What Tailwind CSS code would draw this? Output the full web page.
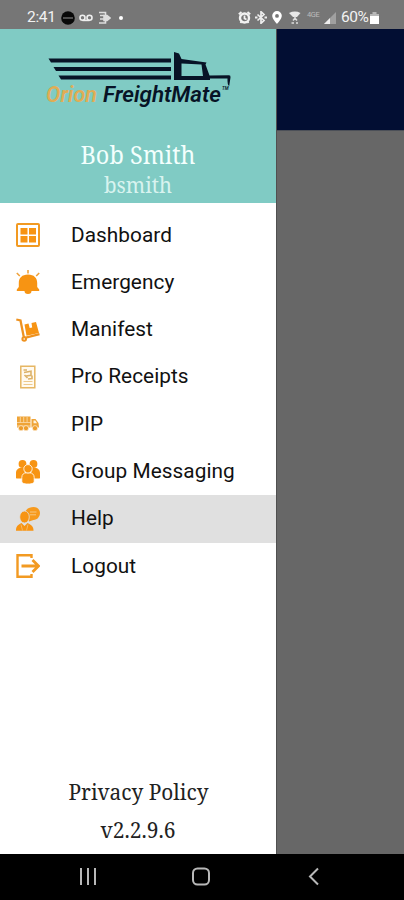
<!DOCTYPE html>
<html lang="en">
<head>
    <meta charset="UTF-8">
    <meta name="viewport" content="width=device-width, initial-scale=1.0">
    <title>Orion FreightMate</title>
    <script src="https://cdn.jsdelivr.net/npm/@tailwindcss/browser@4"></script>
</head>
<body class="bg-black">
    <div class="w-[404px] h-[900px] flex flex-col overflow-hidden font-[Roboto,sans-serif]">

        <!-- Status bar -->
        <header class="h-[29px] shrink-0 bg-[#767676] text-[#f2f2f2] flex items-center justify-between pt-[6px] pl-[27px] pr-[25px]">
            <div class="flex items-center">
                <span class="text-[15.5px] leading-none w-[28px] tracking-[-0.3px] pt-[1px]">2:41</span>
                <svg class="ml-[6px]" width="14" height="14" viewBox="0 0 14 14">
                    <circle cx="7" cy="7" r="6.8" fill="#080808"/>
                    <path d="M2 7h10" stroke="#666" stroke-width="1.5"/>
                </svg>
                <svg class="ml-[4px]" width="14" height="8" viewBox="0 0 14 8" fill="none" stroke="#eee" stroke-width="1.6">
                    <circle cx="3.5" cy="3.8" r="2.5"/>
                    <circle cx="10.5" cy="3.8" r="2.5"/>
                    <path d="M3.5 6.4h7"/>
                </svg>
                <svg class="ml-[6px]" width="12" height="14" viewBox="0 0 12 14" fill="none" stroke="#ddd" stroke-width="1.6">
                    <path d="M0 1.500h6.500V4M1 4.500h4M0 12h6.500v-2M1 8h4"/>
                    <path d="M5 4.500h3l3 2.500-3 2.500H5z" fill="#ddd"/>
                </svg>
                <span class="ml-[8px] w-[4px] h-[4px] rounded-full bg-white"></span>
            </div>
            <div class="flex items-center">
                <svg width="13" height="13" viewBox="0 0 13 13">
                    <circle cx="6.5" cy="7" r="4.5" fill="none" stroke="#f2f2f2" stroke-width="2.4"/>
                    <path d="M.8 3.200L3.500 1M12.200 3.200L9.500 1M2.500 12l1-1.500M10.500 12l-1-1.500M6.500 4.500v3l2 1" fill="none" stroke="#f2f2f2" stroke-width="1.8"/>
                </svg>
                <svg class="ml-[4px]" width="12" height="13" viewBox="0 0 12 13" fill="none" stroke="#eee" stroke-width="1.7">
                    <path d="M2.500 3.500l6.500 6L6 12.300V.7l3 2.800-6.500 6"/>
                    <path d="M0 6.500h2.500M9.500 6.500H12" stroke-width="2.2"/>
                </svg>
                <svg class="ml-[5px]" width="10" height="13" viewBox="0 0 10 13">
                    <path fill="#fff" fill-rule="evenodd" d="M5 0a4.800 4.800 0 0 0-4.800 4.800C.2 8 5 13 5 13s4.800-5 4.800-8.200A4.800 4.800 0 0 0 5 0zm0 3a1.900 1.900 0 1 1 0 3.800A1.900 1.900 0 0 1 5 3z"/>
                </svg>
                <svg class="ml-[7px]" width="12" height="13" viewBox="0 0 12 13">
                    <path d="M0 2Q6-.8 11.500 2L8 6H4z" fill="#e8e8e8"/>
                    <path d="M4 9.500l2-2.300 2 2.300M6 5v3M2.500 12h2.500M7 12h2" fill="none" stroke="#ddd" stroke-width="1.6"/>
                </svg>
                <span class="ml-[6px] mb-[5px] text-[7.5px] leading-none w-[15px] tracking-[-0.4px] text-[#bcbcbc]">4GE</span>
                <svg class="ml-[2px]" width="12" height="12" viewBox="0 0 12 12">
                    <path d="M12 0v12H0z" fill="#a0a0a0"/>
                    <path d="M6 6v6H0z" fill="#eee"/>
                </svg>
                <span class="ml-[5px] text-[15.5px] leading-none w-[28px] tracking-[-0.4px] pt-[1px]">60%</span>
                <svg class="ml-[1px]" width="9" height="13" viewBox="0 0 9 13">
                    <path d="M2.500 1h4v2H9v3H0V3h2.500z" fill="#b8b8b8"/>
                    <path d="M0 5h9v8H0z" fill="#fff"/>
                </svg>
            </div>
        </header>

        <main class="h-[825px] shrink-0 flex">
            <!-- Drawer -->
            <aside class="w-[276px] bg-white flex flex-col">
                <div class="h-[174px] shrink-0 bg-[#80cbc4] flex flex-col items-center">
                    <svg class="shrink-0" width="276" height="84" viewBox="0 0 276 84">
                        <g fill="#071326">
                            <path d="M48.500 29.500H171v4H51zM53.500 38H171v4H56zM58.500 46.500H171v4H61z"/>
                            <path fill-rule="evenodd" d="M174 23l5 1.500 2.500 5.500 25 3.500-1 2 4 11 19.500-.3q1.800 0 1.500 2.300l-1.300 8.500q-2-1-1.700-7.500H210v1.500h-36zM181.500 34.500V47H203l-1.500-11.500z"/>
                        </g>
                        <g font-family="Roboto, sans-serif" font-style="italic" font-size="22" font-weight="600">
                            <text x="46" y="72.500" textLength="51" lengthAdjust="spacingAndGlyphs" fill="#e0ad55">Orion</text>
                            <text x="103" y="72.500" textLength="118" lengthAdjust="spacingAndGlyphs" fill="#071326">FreightMate</text>
                            <text x="222" y="61" font-size="4.500" fill="#071326">TM</text>
                        </g>
                    </svg>
                    <svg class="shrink-0" width="276" height="90" viewBox="0 0 276 90" font-family="'Noto Serif', 'DejaVu Serif', serif">
                        <text x="80.500" y="50.500" font-size="24.500" textLength="115" lengthAdjust="spacingAndGlyphs" fill="#f3fffd">Bob Smith</text>
                        <text x="104" y="79.500" font-size="21.500" textLength="68" lengthAdjust="spacingAndGlyphs" fill="#d8f3ef">bsmith</text>
                    </svg>
                </div>

                <nav class="pt-[8.5px] flex flex-col text-[20.8px] text-[#111] tracking-[0.05px]">
                    <a class="h-[47.3px] flex items-center pl-[16px] gap-[31px]">
                        <svg width="24" height="24" viewBox="0 0 24 24">
                            <rect x="1" y="1" width="22" height="22" rx="1" fill="none" stroke="#f29a22" stroke-width="2"/>
                            <path d="M4.500 5h7v6.500h-7zM13 5h7v6.500h-7zM4.500 13h7v6.500h-7zM13 13h7v6.500h-7z" fill="#f79413"/>
                        </svg>
                        <span>Dashboard</span>
                    </a>
                    <a class="h-[47.3px] flex items-center pl-[16px] gap-[31px]">
                        <svg width="24" height="24" viewBox="0 0 24 24">
                            <path d="M12 4.500c-6 0-9.200 3.500-9.200 8.500v4L.8 19.500V21h22.400v-1.500l-2-2.500v-4c0-5-3.200-8.500-9.200-8.500zM8.500 21a3.500 3 0 0 0 7 0z" fill="#f79413"/>
                            <path d="M12 0v3.500M.8 3l3 3M23.200 3l-3 3" stroke="#efa23c" stroke-width="1.6"/>
                        </svg>
                        <span>Emergency</span>
                    </a>
                    <a class="h-[47.3px] flex items-center pl-[16px] gap-[31px]">
                        <svg width="24" height="24" viewBox="0 0 24 24">
                            <path d="M.3 1.500l4.200 1L8 20l15.500-3.800" fill="none" stroke="#ee9220" stroke-width="2.3"/>
                            <circle cx="8.200" cy="21" r="2.800" fill="#ee9220"/>
                            <circle cx="8.200" cy="21" r=".8" fill="#fff"/>
                            <path d="M8.500 6.500l4-1 1.200 4.500 2.500-.5-.7-4.500L20 4l3 11-12.500 2.800z" fill="#f79413"/>
                        </svg>
                        <span>Manifest</span>
                    </a>
                    <a class="h-[47.3px] flex items-center pl-[16px] gap-[31px]">
                        <svg width="24" height="24" viewBox="0 0 24 24">
                            <path d="M4.800 1.200h14v21.500h-14z" fill="#fffaf0" stroke="#e6b663" stroke-width="1.5"/>
                            <path d="M7.500 5h3.500M8 7.500l7-1.300v4l-5 .8M8.500 10l3 3M12 14l4-.5v-3" fill="none" stroke="#dcb269" stroke-width="1.6"/>
                            <path d="M7.500 16.500h9M7.500 19.500h9" stroke="#edc98c" stroke-width="1.2"/>
                        </svg>
                        <span>Pro Receipts</span>
                    </a>
                    <a class="h-[47.3px] flex items-center pl-[16px] gap-[31px]">
                        <svg width="24" height="24" viewBox="0 0 24 24">
                            <path d="M1 4.500h13.500v11H1zM15.500 7h4l3 4 .5 4.500h-7.500z" fill="#efa437"/>
                            <path d="M17.500 8.500h1.800l1.700 2.800h-3.500z" fill="#fff3df"/>
                            <path d="M1 10.500h14M1 14h14" stroke="#fbdcae" stroke-width=".8"/>
                            <path d="M4.300 5v5.500M7.700 5v5.500M11.100 5v5.500" stroke="#fbdcae" stroke-width=".8"/>
                            <g fill="#ed9c2b" stroke="#fff" stroke-width=".6">
                                <circle cx="5" cy="16.200" r="2.600"/>
                                <circle cx="10" cy="16.200" r="2.600"/>
                                <circle cx="19" cy="16.200" r="2.600"/>
                            </g>
                        </svg>
                        <span>PIP</span>
                    </a>
                    <a class="h-[47.3px] flex items-center pl-[16px] gap-[31px]">
                        <svg width="24" height="24" viewBox="0 0 24 24" fill="#f79413">
                            <circle cx="6.500" cy="4" r="3.900"/>
                            <circle cx="17.500" cy="4" r="3.900"/>
                            <path d="M0 18v-5c0-3 2-5 5-5h3l2 10.500H2q-2 0-2-.5zM24 18v-5c0-3-2-5-5-5h-3l-2 10.500h8q2 0 2-.5z"/>
                            <g stroke="#fff" stroke-width=".8">
                                <path d="M5.800 21v-3.500c0-3 2-4.700 4.500-4.700h3.400c2.500 0 4.500 1.700 4.500 4.700V21c0 2-1.500 3-6.200 3s-6.200-1-6.200-3z"/>
                                <circle cx="12" cy="8.800" r="4.200"/>
                            </g>
                        </svg>
                        <span>Group Messaging</span>
                    </a>
                    <a class="h-[47.3px] flex items-center pl-[16px] gap-[31px] bg-[#e0e0e0]">
                        <svg width="24" height="24" viewBox="0 0 24 24">
                            <path d="M9.500 4C11.500 1 14.500 0 17.500 0 21.500 0 24 2.800 24 6s-2.500 7-6.500 7L13 14.500z" fill="#f79a1d"/>
                            <path d="M14 5h6.500M14 7.800h6" stroke="#f6c681" stroke-width="1"/>
                            <ellipse cx="8.500" cy="10" rx="4.800" ry="6" fill="#f79413" stroke="#e0e0e0" stroke-width=".8"/>
                            <path d="M0 23.800c0-4.300 1.500-5.800 5.500-7.800l3 3 3-3c4 2 6 3.500 6 7.800z" fill="#f79413"/>
                            <path d="M5 17.500l1.500 6M12 17.500l-1.500 6" stroke="#f2c78b" stroke-width=".7"/>
                        </svg>
                        <span>Help</span>
                    </a>
                    <a class="h-[47.3px] flex items-center pl-[16px] gap-[31px]">
                        <svg width="24" height="24" viewBox="0 0 24 24" fill="none" stroke="#f29a22" stroke-width="2.4">
                            <path d="M15.500 4V1.200H1.500v21.600h14V20"/>
                            <path d="M5.500 12h17M16.500 6l6 6-6 6" stroke-width="2.8"/>
                        </svg>
                        <span>Logout</span>
                    </a>
                </nav>

                <svg class="mt-auto shrink-0" width="276" height="84" viewBox="0 0 276 84" font-family="'Noto Serif', 'DejaVu Serif', serif" font-size="21.500" fill="#222">
                    <text x="68.500" y="30" textLength="140" lengthAdjust="spacingAndGlyphs">Privacy Policy</text>
                    <text x="100.500" y="67.500" textLength="75" lengthAdjust="spacingAndGlyphs">v2.2.9.6</text>
                </svg>
            </aside>

            <!-- Dimmed page behind the drawer -->
            <section class="flex-1 bg-[#676767] border-l border-[#505050]">
                <div class="h-[102px] bg-[#020e33] border-b border-[#4c5058]"></div>
            </section>
        </main>

        <!-- Navigation bar -->
        <footer class="flex-1 bg-black flex items-start pt-[12px] pl-[77px]">
            <svg width="250" height="22" viewBox="0 0 250 22" fill="none" stroke="#b8b8b8" stroke-width="2">
                <path d="M4 2v17M11 2v17M18 2v17"/>
                <rect x="116" y="2.500" width="16" height="16" rx="4.500"/>
                <path d="M241 2.500l-8 8 8 8"/>
            </svg>
        </footer>
    </div>
</body>
</html>
